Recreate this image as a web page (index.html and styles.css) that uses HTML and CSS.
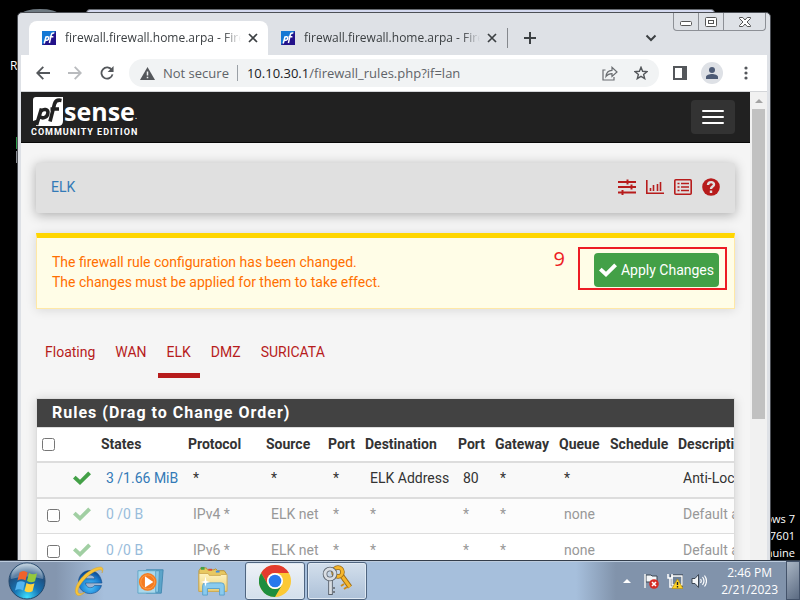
FILE: index.html
```html
<!DOCTYPE html>
<html lang="en">
<head>
<meta charset="utf-8">
<title>firewall.firewall.home.arpa - Firewall: Rules: ELK</title>
<link rel="stylesheet" href="styles.css">
</head>
<body>
<svg class="defs" aria-hidden="true">
  <defs>
    <linearGradient id="pfg" x1="0" y1="0" x2="1" y2="1"><stop offset=".45" stop-color="#1478d4"/><stop offset=".55" stop-color="#23128a"/></linearGradient>
    <radialGradient id="orb" cx=".5" cy=".95" r=".9"><stop offset="0" stop-color="#3fe0ff"/><stop offset=".4" stop-color="#1674b4"/><stop offset=".75" stop-color="#1f4f80"/><stop offset="1" stop-color="#9fb8cc"/></radialGradient>
    <radialGradient id="ieb" cx=".5" cy=".7" r=".7"><stop offset="0" stop-color="#4fc8ff"/><stop offset=".6" stop-color="#1b7fd0"/><stop offset="1" stop-color="#0d3f86"/></radialGradient>
    <linearGradient id="folder" x1="0" y1="0" x2="0" y2="1"><stop offset="0" stop-color="#fff3bf"/><stop offset="1" stop-color="#e9cf78"/></linearGradient>
    <symbol id="check" viewBox="0 0 18 14"><path d="M2.600 4.800 7 8.800 15.200.5 18 3.200 7 14 0 7.500z"/></symbol>
  </defs>
</svg>

<main class="desktop">
  <span class="shortcut-label">R</span>
  <div class="shortcut-edge"></div>
  <div class="shortcut-bin"></div>
  <div class="back-window"></div>
  <p class="watermark">ows 7<br>7601<br>nuine</p>

  <section class="window" aria-label="Chrome">
    <div class="tabstrip">
      <div class="tab active">
        <svg class="favicon" viewBox="0 0 14 14"><rect width="14" height="14" fill="url(#pfg)"/><path d="M2.2 12.5 4.1 5.4M3.7 6.4c1-1 3.3-1 3 1C6.400 9.200 4.700 9.600 3.200 9M7.400 12 9.300 3.700c.3-1.500 1.300-2 3-1.700M7.600 5.700h3.800" fill="none" stroke="#fff" stroke-width="1.500"/></svg>
        <span class="tab-title">firewall.firewall.home.arpa - Firewall: Rules</span>
        <button class="plain" aria-label="Close tab"><svg width="10" height="10" viewBox="0 0 10 10"><path d="M1 1l8 8M9 1 1 9" stroke="#3c4043" stroke-width="1.700"/></svg></button>
      </div>
      <div class="tab">
        <svg class="favicon" viewBox="0 0 14 14"><rect width="14" height="14" fill="url(#pfg)"/><path d="M2.2 12.5 4.1 5.4M3.7 6.4c1-1 3.3-1 3 1C6.400 9.200 4.700 9.600 3.200 9M7.400 12 9.300 3.700c.3-1.500 1.300-2 3-1.700M7.600 5.700h3.800" fill="none" stroke="#fff" stroke-width="1.500"/></svg>
        <span class="tab-title">firewall.firewall.home.arpa - Firewall: Rules</span>
        <button class="plain" aria-label="Close tab"><svg width="10" height="10" viewBox="0 0 10 10"><path d="M1 1l8 8M9 1 1 9" stroke="#3c4043" stroke-width="1.700"/></svg></button>
      </div>
      <span class="tab-divider"></span>
      <button class="plain newtab" aria-label="New tab"><svg width="12" height="12" viewBox="0 0 12 12"><path d="M6 0v12M0 6h12" stroke="#3c4043" stroke-width="2"/></svg></button>
      <button class="plain tabsearch" aria-label="Search tabs"><svg width="12" height="8" viewBox="0 0 12 8"><path d="M1.500 1.500 6 6l4.500-4.500" fill="none" stroke="#3c4043" stroke-width="2"/></svg></button>
      <div class="caption">
        <button aria-label="Minimize"><svg width="12" height="10" viewBox="0 0 12 10"><rect x=".5" y="4.500" width="11" height="4" rx="1" fill="#fff" stroke="#555"/></svg></button>
        <button aria-label="Maximize"><svg width="12" height="10" viewBox="0 0 12 10"><rect x=".5" y=".5" width="11" height="9" rx="1" fill="#fff" stroke="#555"/><rect x="3.500" y="3.500" width="5" height="3" fill="#fff" stroke="#555"/></svg></button>
        <button class="wide" aria-label="Close"><svg width="12" height="10" viewBox="0 0 12 10"><path d="M.5.5h3.300L6 3 8.200.5h3.300v1L8 5l3.500 3.500v1H8.200L6 7 3.800 9.500H.5v-1L4 5 .5 1.500z" fill="#fff" stroke="#555"/></svg></button>
      </div>
    </div>

    <div class="toolbar">
      <button class="plain nav" aria-label="Back"><svg width="14" height="14" viewBox="0 0 14 14"><path d="M14 7H1.500M7.300.8 1.200 7l6.100 6.200" fill="none" stroke="#54575b" stroke-width="1.800"/></svg></button>
      <button class="plain nav" aria-label="Forward"><svg width="14" height="14" viewBox="0 0 14 14"><path d="M0 7h12.500M6.700.8 12.800 7l-6.100 6.200" fill="none" stroke="#b9bbbe" stroke-width="1.800"/></svg></button>
      <button class="plain nav" aria-label="Reload"><svg width="14" height="14" viewBox="0 0 15 15"><path d="M12.600 4.300A6 6 0 1 0 13.400 9" fill="none" stroke="#54575b" stroke-width="1.900"/><path d="M14.500 0v6.300H8.200z" fill="#54575b"/></svg></button>
      <div class="omnibox">
        <svg width="15" height="13" viewBox="0 0 15 13"><path d="M7.500 0 15 13H0z" fill="#54575b"/><path d="M7.500 4.500v4M7.500 9.700v1.500" stroke="#f1f3f4" stroke-width="1.500"/></svg>
        <span class="insecure">Not secure</span>
        <span class="url"><b>10.10.30.1</b>/firewall_rules.php?if=lan</span>
        <button class="plain" aria-label="Share"><svg width="16" height="15" viewBox="0 0 16 15"><path d="M3.500 4H1v10h11v-3" fill="none" stroke="#6a6d71" stroke-width="1.200"/><path d="M4 10.500C4.300 6.500 6.500 4.500 10 4.300V1.300L15 6l-5 4.500V7.700C7.500 7.700 5.500 8.500 4 10.500z" fill="none" stroke="#6a6d71" stroke-width="1.200"/></svg></button>
        <button class="plain star" aria-label="Bookmark"><svg width="14" height="14" viewBox="0 0 14 14"><path d="M7 1.300 8.600 5.300l4.400.3-3.400 2.800 1.100 4.200L7 10.300l-3.700 2.300 1.100-4.200L1 5.600l4.400-.3z" fill="none" stroke="#54575b" stroke-width="1.400"/></svg></button>
      </div>
      <button class="plain side" aria-label="Side panel"><svg width="14" height="14" viewBox="0 0 14 14"><path d="M1 1h12v12H1z" fill="#fff" stroke="#54575b" stroke-width="2"/><path d="M9 0h5v14H9z" fill="#54575b"/></svg></button>
      <button class="plain side avatar" aria-label="Profile"><svg width="14" height="14" viewBox="0 0 14 14"><circle cx="7" cy="4" r="3" fill="#4d5b76"/><path d="M1 13v-2c0-2 3.500-3 6-3s6 1 6 3v2z" fill="#4d5b76"/></svg></button>
      <button class="plain side" aria-label="Menu"><svg width="4" height="14" viewBox="0 0 4 14" fill="#54575b"><circle cx="2" cy="2" r="1.600"/><circle cx="2" cy="7" r="1.600"/><circle cx="2" cy="12" r="1.600"/></svg></button>
    </div>

    <div class="viewport">
      <div class="page">
        <header class="navbar">
          <div class="brand">
            <div class="brand-name">
              <svg width="30" height="29" viewBox="0 0 30 29"><path d="M3 0h27v24q0 5-5 5H3l3-7L0 24V3q0-3 3-3z" fill="#fff"/><path d="M3.500 28 8.500 11.500M7.800 14.500c2.300-3 8.200-2.800 7 2.200C14 21 9 22 6.500 19.300M17 24.500 21.500 7c.9-3.500 3.300-4.300 7-3.600M17.500 12H26" fill="none" stroke="#212121" stroke-width="3.600"/></svg>
              <span>sense</span><i>.</i>
            </div>
            <div class="brand-edition">COMMUNITY EDITION</div>
          </div>
          <button class="burger" aria-label="Toggle navigation"><span></span><span></span><span></span></button>
        </header>

        <div class="content">
          <nav class="crumbs">
            <a href="#">ELK</a>
            <a class="tool" href="#" aria-label="Settings"><svg width="18" height="16" viewBox="0 0 18 16"><path d="M0 3h18M0 8h18M0 13.500h18M9.500.5v5M13.500 5.500v5M4.500 11v5" stroke="#b71c1c" stroke-width="2" fill="none"/></svg></a>
            <a class="tool" href="#" aria-label="Graphs"><svg width="18" height="14" viewBox="0 0 18 14"><path d="M.8 0v13.200H18M4.500 8v3M7.500 5v6M11.500 4v7M14.500 2v9" stroke="#b71c1c" stroke-width="1.600" fill="none"/></svg></a>
            <a class="tool" href="#" aria-label="Log"><svg width="18" height="16" viewBox="0 0 18 16"><rect x=".8" y=".8" width="16.400" height="14.400" rx="1" fill="none" stroke="#b71c1c" stroke-width="1.600"/><path d="M3.500 4.500h2M3.500 8h2M3.500 11.500h2M7 4.500h8M7 8h8M7 11.500h8" stroke="#b71c1c" stroke-width="1.600"/></svg></a>
            <a class="tool" href="#" aria-label="Help"><svg width="18" height="18" viewBox="0 0 18 18"><circle cx="9" cy="9" r="8.800" fill="#b71c1c"/><path d="M6 7c.2-4 6.400-3.500 6-.2C11.700 8.700 9 8.600 9 11M9 12.500v2.400" fill="none" stroke="#e0e0e0" stroke-width="2.400"/></svg></a>
          </nav>

          <div class="alert">
            <p>The firewall rule configuration has been changed.<br>The changes must be applied for them to take effect.</p>
            <span class="step">9</span>
            <div class="callout"><button class="apply"><svg width="18" height="14"><use href="#check"/></svg>Apply Changes</button></div>
          </div>

          <nav class="iface-tabs">
            <a href="#">Floating</a><a href="#">WAN</a><a class="current" href="#">ELK</a><a href="#">DMZ</a><a href="#">SURICATA</a>
          </nav>

          <section class="panel">
            <h2>Rules (Drag to Change Order)</h2>
            <table>
              <colgroup><col class="c-box"><col class="c-icon"><col class="c-states"><col class="c-proto"><col class="c-source"><col class="c-port"><col class="c-dest"><col class="c-port"><col class="c-gate"><col class="c-queue"><col class="c-sched"><col class="c-desc"></colgroup>
              <thead><tr><th><input type="checkbox" aria-label="Select all"></th><th></th><th>States</th><th>Protocol</th><th>Source</th><th>Port</th><th>Destination</th><th>Port</th><th>Gateway</th><th>Queue</th><th>Schedule</th><th>Description</th></tr></thead>
              <tbody>
                <tr class="system"><td></td><td class="state"><svg width="18" height="14"><use href="#check"/></svg></td><td><a href="#">3 /1.66 MiB</a></td><td>*</td><td>*</td><td>*</td><td>ELK Address</td><td>80</td><td>*</td><td>*</td><td></td><td>Anti-Lockout Rule</td></tr>
                <tr class="off"><td><input type="checkbox" aria-label="Select IPv4 rule"></td><td class="state"><svg width="18" height="14"><use href="#check"/></svg></td><td><a href="#">0 /0 B</a></td><td>IPv4 *</td><td>ELK net</td><td>*</td><td>*</td><td>*</td><td>*</td><td>none</td><td></td><td>Default allow LAN</td></tr>
                <tr class="off"><td><input type="checkbox" aria-label="Select IPv6 rule"></td><td class="state"><svg width="18" height="14"><use href="#check"/></svg></td><td><a href="#">0 /0 B</a></td><td>IPv6 *</td><td>ELK net</td><td>*</td><td>*</td><td>*</td><td>*</td><td>none</td><td></td><td>Default allow LAN</td></tr>
              </tbody>
            </table>
          </section>
        </div>
      </div>
      <div class="scrollbar"><svg width="8" height="4" viewBox="0 0 8 4"><path d="M4 0l4 4H0z" fill="#a3a3a3"/></svg><div class="thumb"></div></div>
    </div>
  </section>
</main>

<footer class="taskbar">
  <button class="task start" aria-label="Start"><svg width="38" height="38" viewBox="0 0 38 38"><circle cx="19" cy="19" r="18" fill="url(#orb)" stroke="#23476b"/><path d="M3 17a16 16 0 0 1 32 0Q19 12 3 17z" fill="#fff" opacity=".28"/><path d="M11.500 10.500q4-3 8 0l-2 8q-4-2.500-8 0z" fill="#f0622c"/><path d="M21 11q4 2.500 8 .3l-2 8q-4 2-8-.4z" fill="#94c93d"/><path d="M9 20.500q4-2.500 8 0l-2 8q-4-2.500-8 0z" fill="#55b4f0"/><path d="M18.500 21q4 2.500 8 .3l-2 8q-4 2-8-.4z" fill="#ffd23e"/></svg></button>
  <button class="task" aria-label="Internet Explorer"><svg width="34" height="34" viewBox="0 0 34 34"><path d="M30 19H13.500c.3 5.500 7 6 9 2.500h7C26 33.500 6.500 32 6.500 18S27.500 1 30 19zM13.700 14.800h9.200c-.6-4.800-8.300-5-9.200 0z" fill="url(#ieb)" stroke="#154f8d" stroke-width=".6"/><path d="M5 31C-1 26 10 8 25 3.500c6-1.800 7 1 5 5.500 1-3-1-4-5-2.500C14 11 3 25 6.500 29c1.500 1.300 4 .5 6.500-1-3 3-6 4.500-8 3z" fill="#f7c43a" stroke="#d39a18" stroke-width=".4"/></svg></button>
  <button class="task" aria-label="Media Player"><svg width="28" height="28" viewBox="0 0 30 30"><path d="M10 3h18l-2 25H10z" fill="#5ba4c9" stroke="#4389b0"/><path d="M7 4h17l-1 23H7z" fill="#8cc8e4" stroke="#4c96bd"/><path d="M1 4h19v24H1z" fill="#a9d8ec" stroke="#60a5c6"/><circle cx="11.500" cy="16" r="9.500" fill="#f47b20"/><circle cx="11.500" cy="16" r="7.500" fill="none" stroke="#ff9e45"/><path d="M8.500 10v12l9-6z" fill="#fff"/></svg></button>
  <button class="task" aria-label="Explorer"><svg width="34" height="30" viewBox="0 0 34 32"><path d="M2 5l2-3h6l1 2h7l2-1 2 2h7l2 3v19H2z" fill="#e8c860" stroke="#b89238"/><path d="M4 1h4v3H4z" fill="#43a047"/><path d="M12 3h4v2h-4z" fill="#df4a35"/><path d="M20 5h4v2h-4z" fill="#3f8ee0"/><path d="M2 8h10l1 2h12l1-1h6v18H2z" fill="url(#folder)" stroke="#d0ad55"/><path d="M6 31V21q0-3 3-3h17q3 0 3 3v10h-5v-7H11v7z" fill="#8acbee" stroke="#58a1cd"/><path d="M9 11l1 5 4 1-4 1-1 4-1-4-4-1 4-1z" fill="#fff"/></svg></button>
  <button class="task open front" aria-label="Chrome"><svg width="32" height="32" viewBox="0 0 32 32"><circle cx="16" cy="16" r="16" fill="#fcc934"/><path d="M2.140 8A16 16 0 0 1 29.860 8H16a8 8 0 0 0-6.930 12z" fill="#e33b2e"/><path d="M2.140 8A16 16 0 0 0 16 32l6.930-12A8 8 0 0 1 9.070 20z" fill="#1e8e3e"/><circle cx="16" cy="16" r="8" fill="#fff"/><circle cx="16" cy="16" r="6.300" fill="#2878ec"/></svg></button>
  <button class="task open" aria-label="Credentials"><svg width="30" height="32" viewBox="0 0 30 32"><path d="M20 11l8 11" stroke="#9b6a13" stroke-width="5"/><path d="M20 11l8 11" stroke="#f5b62c" stroke-width="3"/><path d="M22 19l-3 2M25 22l-3 2" stroke="#d08c16" stroke-width="2"/><circle cx="16" cy="7" r="4.500" fill="none" stroke="#9b6a13" stroke-width="4.500"/><circle cx="16" cy="7" r="4.500" fill="none" stroke="#f5b62c" stroke-width="3"/><path d="M8.500 14v16" stroke="#59616b" stroke-width="4.600"/><path d="M8.500 14v15" stroke="#d9dde2" stroke-width="2.800"/><path d="M10 23h3M10 27h3" stroke="#737b85" stroke-width="2"/><circle cx="8" cy="9" r="5" fill="none" stroke="#59616b" stroke-width="4.600"/><circle cx="8" cy="9" r="5" fill="none" stroke="#d9dde2" stroke-width="3"/></svg></button>
  <div class="tray">
    <svg width="8" height="4" viewBox="0 0 8 4"><path d="M4 0l4 4H0z" fill="#fff"/></svg>
    <svg width="16" height="16" viewBox="0 0 16 16"><path d="M2 1v14M3 2h5l1 1h5v7H9L8 9H3z" fill="#f4f6f8" stroke="#3b4653" stroke-width="1"/><path d="M2 1v14" stroke="#fff" stroke-width="1.500"/><circle cx="11" cy="11" r="4.800" fill="#d42b24"/><path d="M9 9l4 4M13 9l-4 4" stroke="#fff" stroke-width="1.600"/></svg>
    <svg width="16" height="16" viewBox="0 0 16 16"><path d="M5 3h10v9H5z" fill="#6f8196" stroke="#29333f" stroke-width="3"/><path d="M5 3h10v9H5z" fill="#6f8196" stroke="#fff" stroke-width="1.400"/><path d="M1 1v4h4V1M3 5v9h3" fill="none" stroke="#fff" stroke-width="1.500"/><path d="M10.500 6 16 15.500H5z" fill="#ffd42a" stroke="#b58b00" stroke-width=".6"/><path d="M10.500 9v3M10.500 13v1.500" stroke="#222" stroke-width="1.400"/></svg>
    <svg width="16" height="16" viewBox="0 0 16 16"><path d="M1 5.500h3L7.500 1.500v13L4 10.500H1z" fill="#f4f6f8" stroke="#3b4653"/><path d="M9.500 6q1.500 2 0 4M11.500 4q3 4 0 8M13.500 2.500q4 5.500 0 11" fill="none" stroke="#fff" stroke-width="1.200"/></svg>
    <div class="clock"><time>2:46 PM</time><span>2/21/2023</span></div>
  </div>
  <button class="peek" aria-label="Show desktop"></button>
</footer>
</body>
</html>
```
FILE: styles.css
```css
* { box-sizing: border-box; }
body {
  margin: 0;
  height: 100vh;
  display: flex;
  flex-direction: column;
  overflow: hidden;
  background: #000;
  color: #333;
  font: 14px/20px Roboto, sans-serif;
}
button { font: inherit; margin: 0; padding: 0; border: 0; }
a { color: #337ab7; text-decoration: none; }
svg { display: block; flex: none; }
.defs { position: absolute; width: 0; height: 0; }
.plain { display: flex; align-items: center; justify-content: center; background: none; }

/* Desktop */
.desktop { flex: 1; position: relative; overflow: hidden; min-height: 0; }
.shortcut-label { position: absolute; left: 10px; top: 57px; color: #fff; font: 12px/18px "Open Sans", sans-serif; }
.shortcut-edge { position: absolute; left: 16px; top: 137px; width: 1px; height: 12px; background: #2f9d4a; box-shadow: 0 14px #8d9096; }
.shortcut-bin { position: absolute; left: 22px; top: 9px; width: 36px; height: 12px; border-radius: 18px 18px 0 0 / 5px 5px 0 0; background: #6f7a82; }
.back-window { position: absolute; left: 86px; right: 85px; top: 9px; height: 8px; border: 1px solid #666a70; border-radius: 4px; background: #d5daf0; }
.watermark { position: absolute; right: 5px; bottom: -1px; margin: 0; color: #fff; text-align: right; white-space: nowrap; font: 11px/17px "Open Sans", sans-serif; }

/* Browser window */
.window {
  position: absolute;
  inset: 12px 29px -10px 17px;
  display: flex;
  flex-direction: column;
  padding: 0 3px;
  border: 1px solid #4c4f55;
  border-radius: 5px 5px 0 0;
  background: #dee1e6;
  font-family: "Open Sans", sans-serif;
}
.tabstrip { display: flex; align-items: flex-end; height: 42px; padding-left: 8px; flex: none; }
.tab { display: flex; align-items: center; flex: none; width: 239px; height: 34px; padding: 0 10px 0 13px; }
.tab.active { background: #fff; border-radius: 8px 8px 0 0; }
.favicon { width: 14px; height: 14px; }
.tab-title {
  flex: 1;
  margin: 0 7px 0 9px;
  overflow: hidden;
  white-space: nowrap;
  color: #3c4043;
  font-size: 12px;
  mask-image: linear-gradient(90deg, #000 90%, transparent);
}
.tab-divider { width: 1px; height: 20px; margin-bottom: 7px; background: #85888d; }
.newtab { width: 12px; height: 34px; margin-left: 16px; }
.tabsearch { width: 12px; height: 34px; margin-left: auto; }
.caption { display: flex; align-self: flex-start; margin: 0 1px 0 16px; border: 1px solid #8d9096; border-top: 0; border-radius: 0 0 4px 4px; }
.caption button { display: flex; align-items: center; justify-content: center; width: 25px; height: 17px; background: none; border-right: 1px solid #8d9096; }
.caption .wide { width: 41px; border-right: 0; }

.toolbar { display: flex; align-items: center; height: 37px; flex: none; padding: 0 14px 0 6px; background: #fff; border-bottom: 1px solid #d3d5d8; }
.nav { width: 32px; height: 28px; }
.omnibox { display: flex; align-items: center; flex: 1; height: 28px; margin: 0 14px 0 6px; padding: 0 11px; border-radius: 14px; background: #f1f3f4; font-size: 13px; color: #5f6368; }
.insecure { margin-left: 8px; padding-right: 8px; border-right: 1px solid #9aa0a6; line-height: 16px; }
.url { flex: 1; margin-left: 9px; color: #5f6368; }
.url b { font-weight: 400; color: #202124; }
.star { margin-left: 16px; }
.side { margin-right: 14px; }
.side:last-child { width: 14px; margin: 0 0 0 2px; }
.avatar { width: 22px; height: 22px; border-radius: 11px; background: #dee1e6; }

/* Page */
.viewport { flex: 1; display: flex; min-height: 0; overflow: hidden; font-family: Roboto, sans-serif; background: #f5f5f5; }
.page { flex: 1; min-width: 0; }
.navbar { display: flex; justify-content: space-between; align-items: center; height: 51px; padding: 0 15px 0 10px; background: #212121; border-bottom: 1px solid #080808; }
.brand { color: #fff; }
.brand-name { display: flex; align-items: center; height: 29px; padding-left: 2px; font: 700 25px/28px "Open Sans", sans-serif; }
.brand-name span { margin-left: 1px; }
.brand-name i { font: 10px/10px Roboto, sans-serif; padding-top: 10px; }
.brand-edition { font-size: 9px; line-height: 12px; font-weight: 700; letter-spacing: 1px; }
.burger { display: flex; flex-direction: column; align-items: center; justify-content: center; gap: 4px; width: 44px; height: 34px; border-radius: 4px; background: #333; }
.burger span { width: 22px; height: 2px; background: #fff; border-radius: 1px; }
.content { padding: 20px 15px; }

.crumbs { display: flex; align-items: center; gap: 10px; height: 50px; padding: 0 15px 2px; border-radius: 2px; background: #e0e0e0; box-shadow: 0 2px 12px rgba(0, 0, 0, .3); }
.crumbs a:first-child { margin-right: auto; }

.alert { display: flex; align-items: flex-start; margin-top: 20px; height: 76px; padding: 9px 7px 0 15px; border: 1px solid #ffe8a6; border-top: 5px solid #ffd600; background: #fffde7; box-shadow: 0 1px 10px rgba(0, 0, 0, .12); color: #ff6f00; }
.alert p { flex: 1; margin: 5px 0 0; }
.step { color: #ed1c24; font: 20px/24px "Open Sans", sans-serif; margin-right: 13px; }
.callout { padding: 4px 6px 1px 14px; border: 2px solid #ed1c24; }
.apply { display: flex; align-items: center; gap: 4px; height: 34px; padding: 0 5px; border-radius: 4px; background: #43a047; color: #fff; white-space: nowrap; }
.apply svg { fill: #fff; }

.iface-tabs { display: flex; gap: 2px; margin-top: 33px; }
.iface-tabs a { padding: 0 9px 11px; color: #b71c1c; border-bottom: 5px solid transparent; }
.iface-tabs .current { border-color: #b71c1c; }

.panel { margin-top: 20px; border: 1px solid #ddd; background: #fff; overflow: hidden; box-shadow: 0 1px 10px rgba(0, 0, 0, .15); }
.panel h2 { margin: 0; padding: 4px 15px; background: #424242; color: #fff; font-size: 16px; line-height: 20px; font-weight: 700; letter-spacing: 1px; }
table { width: 780px; table-layout: fixed; border-collapse: collapse; }
.c-box { width: 31px; }
.c-icon { width: 28px; }
.c-states { width: 87px; }
.c-proto { width: 78px; }
.c-source { width: 62px; }
.c-port { width: 37px; }
.c-dest { width: 93px; }
.c-gate { width: 64px; }
.c-queue { width: 51px; }
.c-sched { width: 68px; }
th, td { text-align: left; white-space: nowrap; vertical-align: middle; }
th { height: 34px; padding: 0 5px; font-weight: 700; border-top: 1px solid #ddd; }
td { height: 36px; padding: 0 10px 3px; border-top: 1px solid #ddd; }
tr.system td { border-top: 2px solid #ddd; border-bottom: 2px solid #ddd; background: #f9f9f9; }
tr.off { color: #989898; }
tr.off:nth-child(2) { background: #fcfcfc; }
tr.off a { color: #99bcdb; }
td.state { padding: 0 5px 3px; }
td:first-child { padding-bottom: 1px; }
.state svg { fill: #43a047; }
.off .state svg { fill: #a1cfa3; }
input[type="checkbox"] { display: block; width: 13px; height: 13px; margin: 0; }

.scrollbar { flex: none; width: 17px; padding: 7px 2px 0; background: #f1f1f1; }
.scrollbar svg { margin: 0 auto 6px; }
.thumb { height: 66%; background: #c1c1c1; }

/* Taskbar */
.taskbar { display: flex; align-items: center; flex: none; height: 40px; border-top: 1px solid #333d4b; box-shadow: inset 0 1px #bccbdd; background: linear-gradient(90deg, #8496af 0, #8496af 7%, #a6bfdc 13%, #a6bfdc 72%, #8193ab 77%); }
.task { display: flex; align-items: center; justify-content: center; width: 60px; height: 38px; background: none; border: 1px solid transparent; border-radius: 3px; margin-right: 2px; }
.task.start { width: 54px; margin-right: 5px; }
.task.open { background: linear-gradient(#d3dfec, #adc1d8); border-color: #4f6580; box-shadow: inset 0 0 0 1px #dfe9f3; }
.task.front { background: linear-gradient(#eef2f7, #d3dfeb); }
.tray { display: flex; align-items: center; gap: 8px; margin-left: auto; }
.tray > svg:first-child { margin-right: 4px; }
.clock { display: flex; flex-direction: column; align-items: center; margin: 0 8px 0 6px; color: #fff; font: 12px/17px "Open Sans", sans-serif; }
.peek { width: 14px; height: 39px; border: 1px solid #44536a; background: linear-gradient(135deg, #a9b5c4, #5b6b82); }
```
